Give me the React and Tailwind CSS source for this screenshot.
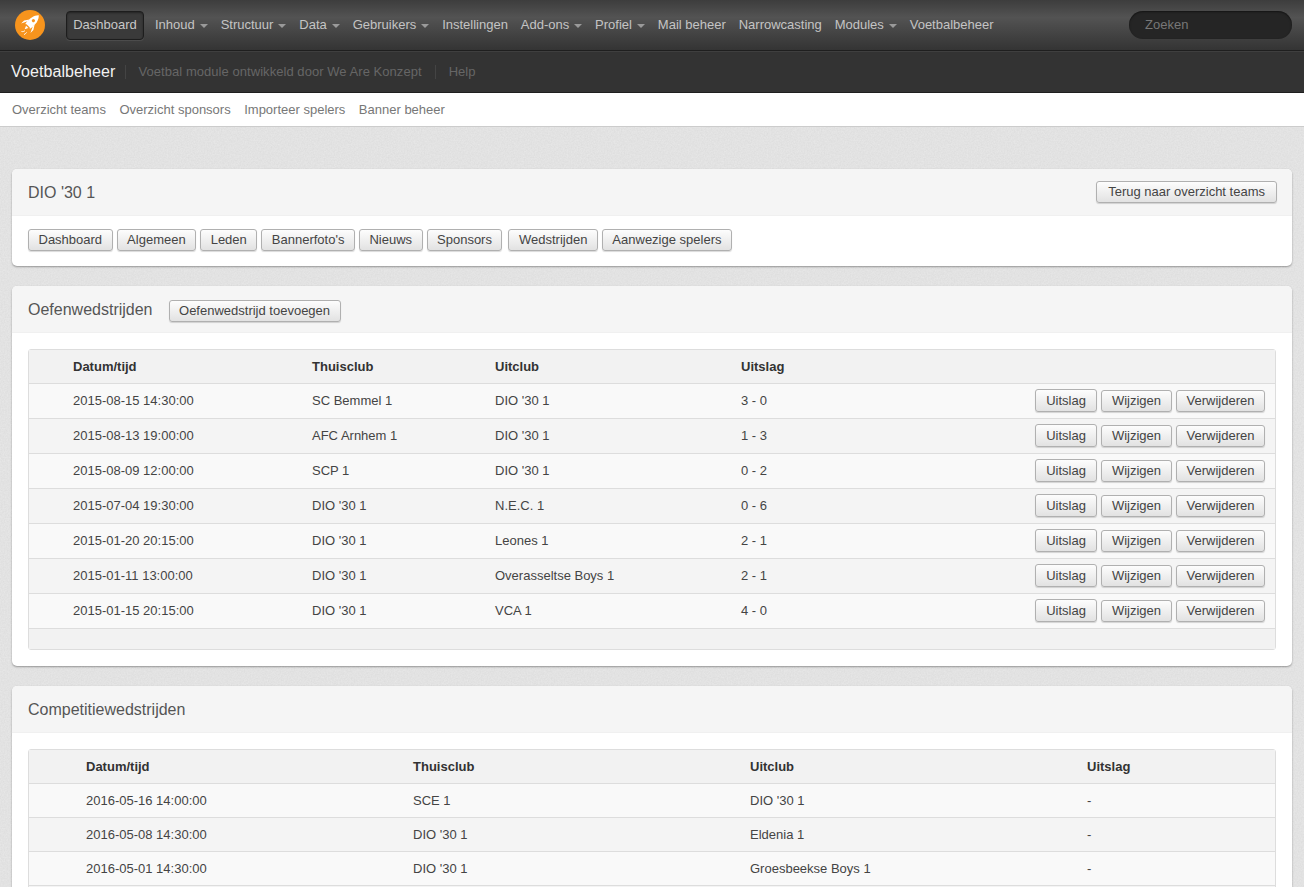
const navItems = [
  ["Inhoud", true],
  ["Structuur", true],
  ["Data", true],
  ["Gebruikers", true],
  ["Instellingen", false],
  ["Add-ons", true],
  ["Profiel", true],
  ["Mail beheer", false],
  ["Narrowcasting", false],
  ["Modules", true],
  ["Voetbalbeheer", false],
];

const teamTabs = ["Dashboard", "Algemeen", "Leden", "Bannerfoto's", "Nieuws", "Sponsors", "Wedstrijden", "Aanwezige spelers"];

const friendlies = [
  ["2015-08-15 14:30:00", "SC Bemmel 1", "DIO '30 1", "3 - 0"],
  ["2015-08-13 19:00:00", "AFC Arnhem 1", "DIO '30 1", "1 - 3"],
  ["2015-08-09 12:00:00", "SCP 1", "DIO '30 1", "0 - 2"],
  ["2015-07-04 19:30:00", "DIO '30 1", "N.E.C. 1", "0 - 6"],
  ["2015-01-20 20:15:00", "DIO '30 1", "Leones 1", "2 - 1"],
  ["2015-01-11 13:00:00", "DIO '30 1", "Overasseltse Boys 1", "2 - 1"],
  ["2015-01-15 20:15:00", "DIO '30 1", "VCA 1", "4 - 0"],
];

const league = [
  ["2016-05-16 14:00:00", "SCE 1", "DIO '30 1", "-"],
  ["2016-05-08 14:30:00", "DIO '30 1", "Eldenia 1", "-"],
  ["2016-05-01 14:30:00", "DIO '30 1", "Groesbeekse Boys 1", "-"],
];

const RocketLogo = () => (
  <svg viewBox="0 0 30 30" className="h-[30px] w-[30px] shrink-0">
    <circle cx="15" cy="15" r="15" fill="#f7941d" />
    <g transform="translate(16 13) rotate(45)" fill="#fff">
      <path d="M0-11C3.6-7.6 4.4-2.6 3.4 4H-3.4C-4.4-2.6-3.6-7.6 0-11Z" />
      <path d="M-3.6-1.5L-6.6 3.2V7.4L-3-.2 -2.4 4.6H-3.4Z" />
      <path d="M3.6-1.5L6.6 3.2V7.4L3-.2 2.4 4.6H3.4Z" />
      <circle cx="0" cy="-3.4" r="1.6" fill="#f7941d" />
      <path d="M-1.6 5.4H1.6L0 9Z" />
    </g>
    <path d="M6.5 21.5C8 21.8 9 21.4 10 20.6M9 24.5C10.4 24 11 23.2 11.6 22.4" stroke="#fff" strokeWidth="1" fill="none" />
  </svg>
);

const Btn = ({ children, className = "" }) => (
  <button className={"flex items-center justify-center rounded-[3px] border border-[#b0b0b0] bg-gradient-to-b from-[#fdfdfd] to-[#e2e2e2] text-[13px] leading-none text-[#444] shadow-[0_1px_1px_rgba(0,0,0,0.15)] " + className}>
    {children}
  </button>
);

const Card = ({ header, children }) => (
  <section className="mb-5 overflow-hidden rounded-[5px] bg-white shadow-[0_1px_2px_rgba(0,0,0,0.35)]">
    <header className="flex h-[47px] items-center justify-between border-b border-[#f0f0f0] bg-[#f5f5f5] pl-4 pr-[15px]">{header}</header>
    {children}
  </section>
);

const App = () => {
  return (
    <div className="h-[887px] overflow-hidden bg-[#e9e9e9] bg-[url('data:image/svg+xml,%3Csvg%20xmlns=%22http://www.w3.org/2000/svg%22%20width=%22200%22%20height=%22200%22%3E%3Cfilter%20id=%22n%22%3E%3CfeTurbulence%20type=%22fractalNoise%22%20baseFrequency=%220.7%22%20numOctaves=%223%22/%3E%3CfeColorMatrix%20values=%220%200%200%200%200.5%200%200%200%200%200.5%200%200%200%200%200.5%200%200%200%200.3%200%22/%3E%3C/filter%3E%3Crect%20width=%22200%22%20height=%22200%22%20filter=%22url(%23n)%22/%3E%3C/svg%3E')] font-['Liberation_Sans',Arial,sans-serif] text-[13px] text-[#444]">
      {/* top bar */}
      <nav className="flex h-[51px] items-center border-b border-[#1f1f1f] bg-gradient-to-b from-[#3d3d3d] via-[#535353] via-35% to-[#343434] pl-[15px]">
        <RocketLogo />
        <a className="ml-[21px] flex h-[29px] w-[78px] items-center justify-center rounded-[4px] border border-[#1d1d1d] bg-[#3a3a3a] text-[#c8c8c8] shadow-[inset_0_1px_2px_rgba(0,0,0,0.4),0_1px_0_rgba(255,255,255,0.08)]">Dashboard</a>
        <ul className="ml-[11px] flex items-center gap-[12.9px] text-[#c4c4c4]">
          {navItems.map(([label, caret]) => (
            <li key={label} className="flex items-center whitespace-nowrap">
              {label}
              {caret && <span className="ml-[5px] mt-px h-0 w-0 border-x-[4px] border-t-[4px] border-x-transparent border-t-[#9a9a9a]" />}
            </li>
          ))}
        </ul>
        <div className="ml-auto mr-[12px] flex h-[28px] w-[163px] items-center rounded-full bg-[#252525] pl-4 text-[#777] shadow-[inset_0_1px_2px_rgba(0,0,0,0.5)]">Zoeken</div>
      </nav>

      {/* module bar */}
      <div className="flex h-[42px] items-center border-b border-[#1f1f1f] bg-[#333] pl-[11px] pt-px shadow-[inset_0_1px_0_rgba(255,255,255,0.06)]">
        <span className="text-[16px] tracking-[0.1px] text-[#f2f2f2]">Voetbalbeheer</span>
        <span className="ml-[9px] h-[14px] w-px bg-[#444]" />
        <span className="ml-[13px] tracking-[0.05px] text-[#666]">Voetbal module ontwikkeld door We Are Konzept</span>
        <span className="ml-[13px] h-[14px] w-px bg-[#444]" />
        <span className="ml-[13px] text-[#666]">Help</span>
      </div>

      {/* sub nav */}
      <div className="flex h-[34px] items-center gap-[13.5px] border-b border-[#ccc] bg-white pl-3 text-[#777]">
        <a>Overzicht teams</a>
        <a>Overzicht sponsors</a>
        <a>Importeer spelers</a>
        <a>Banner beheer</a>
      </div>

      <main className="px-3 pt-[42px]">
        <Card
          header={
            <>
              <h2 className="pt-[2px] text-base font-normal text-[#555]">DIO '30 1</h2>
              <Btn className="h-[22px] px-[11px] pb-[2px]">Terug naar overzicht teams</Btn>
            </>
          }
        >
          <div className="flex h-[50px] items-center gap-1 px-4 pb-[2px]">
            {teamTabs.map((t) => (
              <Btn key={t} className={"h-[22px] px-[9.5px] pb-[2px] " + (t === "Wedstrijden" ? "ml-[2px]" : "")}>{t}</Btn>
            ))}
          </div>
        </Card>

        <Card
          header={
            <div className="flex items-center gap-4">
              <h2 className="pt-[2px] text-base font-normal text-[#555]">Oefenwedstrijden</h2>
              <Btn className="mt-1 h-[22px] px-[9.5px] pb-[2px]">Oefenwedstrijd toevoegen</Btn>
            </div>
          }
        >
          <div className="p-4">
            <table className="w-full table-fixed border-separate border-spacing-0 rounded-[3px] border border-[#ddd]">
              <colgroup>
                <col className="w-[44px]" />
                <col className="w-[239px]" />
                <col className="w-[183px]" />
                <col className="w-[246px]" />
                <col className="w-[100px]" />
                <col />
              </colgroup>
              <thead>
                <tr className="h-[33px] bg-[#f2f2f2] text-left font-bold text-[#333]">
                  <th />
                  <th>Datum/tijd</th>
                  <th>Thuisclub</th>
                  <th>Uitclub</th>
                  <th>Uitslag</th>
                  <th />
                </tr>
              </thead>
              <tbody>
                {friendlies.map((r, i) => (
                  <tr key={i} className={"h-[35px] " + (i % 2 ? "bg-[#f4f4f4]" : "bg-[#f9f9f9]")}>
                    <td className="border-t border-[#ddd]" />
                    {r.map((c, j) => (
                      <td key={j} className="border-t border-[#ddd]">{c}</td>
                    ))}
                    <td className="border-t border-[#ddd] pr-[10px]">
                      <div className="mb-px flex items-end justify-end gap-1">
                        <Btn className="h-[23px] px-[10px]">Uitslag</Btn>
                        <Btn className="h-[22px] px-[10px] pb-[2px]">Wijzigen</Btn>
                        <Btn className="h-[22px] px-[9.5px] pb-[2px]">Verwijderen</Btn>
                      </div>
                    </td>
                  </tr>
                ))}
                <tr className="h-[21px] bg-[#f2f2f2]">
                  <td colSpan={6} className="border-t border-[#ddd]" />
                </tr>
              </tbody>
            </table>
          </div>
        </Card>

        <Card header={<h2 className="pt-[2px] text-base font-normal text-[#555]">Competitiewedstrijden</h2>}>
          <div className="px-4 pt-4">
            <table className="w-full table-fixed border-separate border-spacing-0 rounded-[3px] border border-[#ddd]">
              <colgroup>
                <col className="w-[57px]" />
                <col className="w-[327px]" />
                <col className="w-[337px]" />
                <col className="w-[337px]" />
                <col />
              </colgroup>
              <thead>
                <tr className="h-[33px] bg-[#f2f2f2] text-left font-bold text-[#333]">
                  <th />
                  <th>Datum/tijd</th>
                  <th>Thuisclub</th>
                  <th>Uitclub</th>
                  <th>Uitslag</th>
                </tr>
              </thead>
              <tbody>
                {league.map((r, i) => (
                  <tr key={i} className={"h-[34px] " + (i % 2 ? "bg-[#f4f4f4]" : "bg-[#f9f9f9]")}>
                    <td className="border-t border-[#ddd]" />
                    {r.map((c, j) => (
                      <td key={j} className="border-t border-[#ddd]">{c}</td>
                    ))}
                  </tr>
                ))}
                <tr className="h-[34px] bg-[#f4f4f4]">
                  <td colSpan={5} className="border-t border-[#ddd]" />
                </tr>
              </tbody>
            </table>
          </div>
        </Card>
      </main>
    </div>
  );
};

export default App;
